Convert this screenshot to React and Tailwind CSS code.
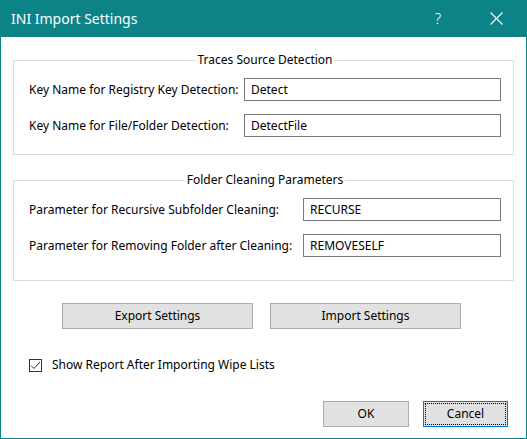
import React from 'react';

const font = { fontFamily: '"Noto Sans", "Liberation Sans", sans-serif' };

function Field({ label, value, labelWidth }) {
  return (
    <div className="flex items-center h-[23px]">
      <label className={`${labelWidth} shrink-0 text-[12px] text-black`}>{label}</label>
      <div className="flex-1 h-[23px] border border-[#7a7a7a] bg-white flex items-center pl-[6px] text-[12px] text-black">
        {value}
      </div>
    </div>
  );
}

function Group({ title, children, className }) {
  return (
    <fieldset className={`mx-[12px] border border-[#dcdcdc] pl-[15px] pr-[12px] ${className}`}>
      <legend className="mx-auto px-[2px] text-[12px] leading-[16px] text-black">{title}</legend>
      <div className="flex flex-col gap-[13px] pt-[10px]">{children}</div>
    </fieldset>
  );
}

function Button({ children, className = '', focused }) {
  return (
    <button
      className={`h-[26px] bg-[#e1e1e1] text-[12px] text-black flex items-stretch ${
        focused ? 'border border-[#0078d7] p-[1px]' : 'border border-[#adadad]'
      } ${className}`}
    >
      <span
        className={`flex-1 flex items-center justify-center ${
          focused ? 'border border-dotted border-black' : ''
        }`}
      >
        {children}
      </span>
    </button>
  );
}

export default function App() {
  return (
    <div className="w-[527px] h-[439px] bg-white flex flex-col border-x border-b border-[#0b8387]" style={font}>
      {/* TITLE BAR */}
      <div className="h-[37px] -mx-[1px] bg-[#0b8387] flex items-center text-white shrink-0">
        <span className="pl-[11px] text-[14px] flex-1">INI Import Settings</span>
        <span className="w-[46px] mr-[12px] text-center text-[15px] font-light">?</span>
        <span className="w-[46px] flex justify-center mr-[8px]">
          <svg width="13" height="13" viewBox="0 0 13 13" stroke="white" strokeWidth="1.1" fill="none">
            <path d="M0.5 0.5L12.5 12.5M12.5 0.5L0.5 12.5" />
          </svg>
        </span>
      </div>

      <Group title="Traces Source Detection" className="mt-[15px] pb-[17px]">
        <Field label="Key Name for Registry Key Detection:" value="Detect" labelWidth="w-[215px]" />
        <Field label="Key Name for File/Folder Detection:" value="DetectFile" labelWidth="w-[215px]" />
      </Group>

      <Group title="Folder Cleaning Parameters" className="mt-[17px] pb-[23px]">
        <Field label="Parameter for Recursive Subfolder Cleaning:" value="RECURSE" labelWidth="w-[274px]" />
        <Field label="Parameter for Removing Folder after Cleaning:" value="REMOVESELF" labelWidth="w-[274px]" />
      </Group>

      <div className="mt-[22px] pl-[61px] flex gap-[17px]">
        <Button className="w-[191px]">Export Settings</Button>
        <Button className="w-[191px]">Import Settings</Button>
      </div>

      <div className="mt-[27px] pl-[28px] flex items-center gap-[10px]">
        <span className="w-[13px] h-[13px] border border-[#333333] bg-white flex items-center justify-center">
          <svg width="11" height="11" viewBox="0 0 11 11" fill="none" stroke="#333" strokeWidth="1">
            <path d="M1 5.5L4 8.5L10 2" />
          </svg>
        </span>
        <span className="text-[12px] text-black">Show Report After Importing Wipe Lists</span>
      </div>

      <div className="mt-[27px] pr-[18px] flex justify-end gap-[14px]">
        <Button className="w-[86px]">OK</Button>
        <Button className="w-[85px]" focused>Cancel</Button>
      </div>
    </div>
  );
}
